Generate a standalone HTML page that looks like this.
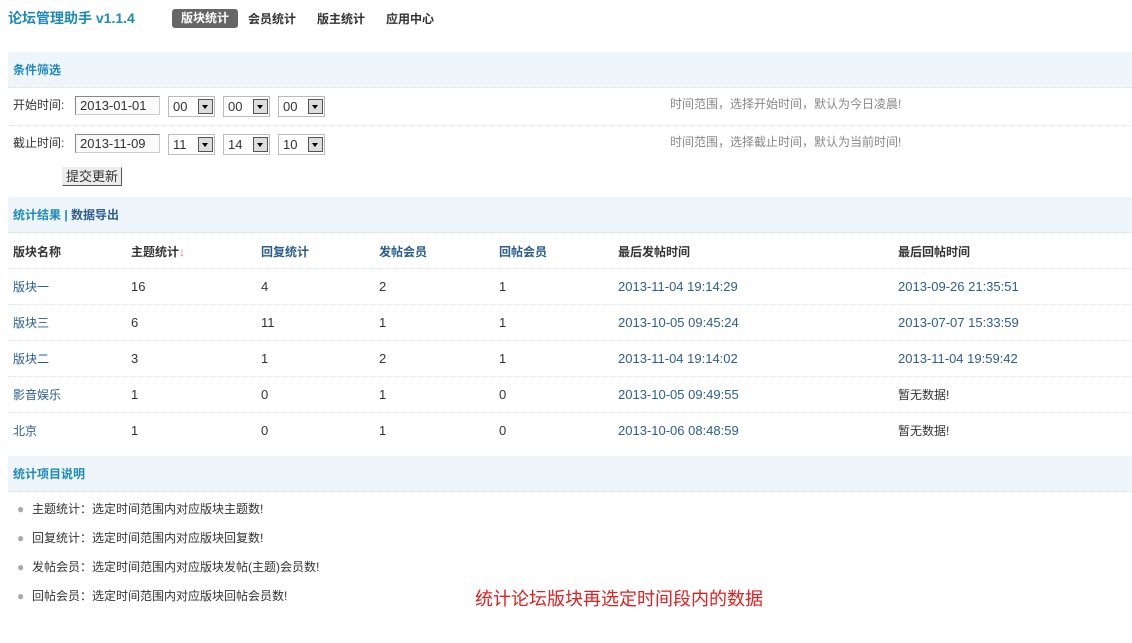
<!DOCTYPE html><html><head><meta charset="utf-8"><style>
body{margin:0;width:1132px;height:643px;background:#fff;font-family:"Liberation Sans","Noto Sans CJK SC",sans-serif;font-size:12px;color:#333;position:relative;overflow:hidden}
.a{position:absolute;white-space:nowrap;line-height:16px}
.hd{position:absolute;left:8px;width:1124px;height:35px;background:#eef6fc;border-bottom:1px dotted #d6dde3}
.hd span{position:absolute;left:5px;top:10px;font-weight:bold;color:#1d8ab8;line-height:16px}
.ln{position:absolute;left:8px;width:1124px;border-top:1px dotted #dde2e6}
.in{position:absolute;height:19px;border:1px solid #999;border-color:#888 #ccc #ccc #888;background:#fafafa;font-size:13px;line-height:17px;padding-left:4px;box-sizing:border-box}
.sel{position:absolute;width:47px;height:21px;border:1px solid #bbb;box-sizing:border-box;font-size:13px;line-height:19px;padding-left:4px;top:0}
.sel i{position:absolute;right:1px;top:2px;width:15px;height:15px;border:1px solid #555;background:#ddd;box-sizing:border-box}
.sel i:after{content:"";position:absolute;left:3px;top:5px;border:3px solid transparent;border-top:4px solid #000;border-bottom:0}
.lk{color:#2b5d8f}
.g{color:#888}
.b{font-weight:bold}
.n{font-size:13px}
.li span{color:#aaa;display:inline-block;width:15px}
</style></head><body>
<div class="a b" style="left:8px;top:10px;font-size:14px;color:#1d8ab8">论坛管理助手 v1.1.4</div>
<div class="a b" style="left:172px;top:9px;width:66px;height:19px;background:#666;color:#fff;border-radius:3px;text-align:center;line-height:19px">版块统计</div>
<div class="a b" style="left:248px;top:11px">会员统计</div>
<div class="a b" style="left:317px;top:11px">版主统计</div>
<div class="a b" style="left:386px;top:11px">应用中心</div>

<div class="hd" style="top:52px"><span>条件筛选</span></div>
<div class="a" style="left:13px;top:97px">开始时间:</div>
<div class="in" style="left:75px;top:96px;width:85px">2013-01-01</div>
<div class="a" style="left:168px;top:96px"><div class="sel" style="left:0">00<i></i></div><div class="sel" style="left:55px">00<i></i></div><div class="sel" style="left:110px">00<i></i></div></div>
<div class="a g" style="left:670px;top:96px">时间范围，选择开始时间，默认为今日凌晨!</div>
<div class="ln" style="top:125px"></div>
<div class="a" style="left:13px;top:135px">截止时间:</div>
<div class="in" style="left:75px;top:134px;width:85px">2013-11-09</div>
<div class="a" style="left:168px;top:134px"><div class="sel" style="left:0">11<i></i></div><div class="sel" style="left:55px">14<i></i></div><div class="sel" style="left:110px">10<i></i></div></div>
<div class="a g" style="left:670px;top:134px">时间范围，选择截止时间，默认为当前时间!</div>
<div class="a" style="left:62px;top:167px;width:60px;height:19px;border:1px solid #777;border-color:#eee #555 #555 #eee;background:#ececec;text-align:center;line-height:17px;font-size:13px;box-sizing:border-box">提交更新</div>

<div class="hd" style="top:197px"><span>统计结果 <span style="position:static;color:#1d8ab8">|</span> <span style="position:static;color:#2b5d8f">数据导出</span></span></div>
<div class="a b" style="left:13px;top:244px">版块名称</div>
<div class="a b" style="left:131px;top:244px">主题统计<span style="color:#f66">↓</span></div>
<div class="a b lk" style="left:261px;top:244px">回复统计</div>
<div class="a b lk" style="left:379px;top:244px">发帖会员</div>
<div class="a b lk" style="left:499px;top:244px">回帖会员</div>
<div class="a b" style="left:618px;top:244px">最后发帖时间</div>
<div class="a b" style="left:898px;top:244px">最后回帖时间</div>
<div class="ln" style="top:268px"></div>

<div class="a lk" style="left:13px;top:279px">版块一</div><div class="a n" style="left:131px;top:279px">16</div><div class="a n" style="left:261px;top:279px">4</div><div class="a n" style="left:379px;top:279px">2</div><div class="a n" style="left:499px;top:279px">1</div><div class="a lk n" style="left:618px;top:279px">2013-11-04 19:14:29</div><div class="a lk n" style="left:898px;top:279px">2013-09-26 21:35:51</div>
<div class="ln" style="top:304px"></div>
<div class="a lk" style="left:13px;top:315px">版块三</div><div class="a n" style="left:131px;top:315px">6</div><div class="a n" style="left:261px;top:315px">11</div><div class="a n" style="left:379px;top:315px">1</div><div class="a n" style="left:499px;top:315px">1</div><div class="a lk n" style="left:618px;top:315px">2013-10-05 09:45:24</div><div class="a lk n" style="left:898px;top:315px">2013-07-07 15:33:59</div>
<div class="ln" style="top:340px"></div>
<div class="a lk" style="left:13px;top:351px">版块二</div><div class="a n" style="left:131px;top:351px">3</div><div class="a n" style="left:261px;top:351px">1</div><div class="a n" style="left:379px;top:351px">2</div><div class="a n" style="left:499px;top:351px">1</div><div class="a lk n" style="left:618px;top:351px">2013-11-04 19:14:02</div><div class="a lk n" style="left:898px;top:351px">2013-11-04 19:59:42</div>
<div class="ln" style="top:376px"></div>
<div class="a lk" style="left:13px;top:387px">影音娱乐</div><div class="a n" style="left:131px;top:387px">1</div><div class="a n" style="left:261px;top:387px">0</div><div class="a n" style="left:379px;top:387px">1</div><div class="a n" style="left:499px;top:387px">0</div><div class="a lk n" style="left:618px;top:387px">2013-10-05 09:49:55</div><div class="a" style="left:898px;top:387px">暂无数据!</div>
<div class="ln" style="top:412px"></div>
<div class="a lk" style="left:13px;top:423px">北京</div><div class="a n" style="left:131px;top:423px">1</div><div class="a n" style="left:261px;top:423px">0</div><div class="a n" style="left:379px;top:423px">1</div><div class="a n" style="left:499px;top:423px">0</div><div class="a lk n" style="left:618px;top:423px">2013-10-06 08:48:59</div><div class="a" style="left:898px;top:423px">暂无数据!</div>

<div class="hd" style="top:456px"><span>统计项目说明</span></div>
<div class="a li" style="left:17px;top:495px;line-height:29px">
<div><span>●</span>主题统计：选定时间范围内对应版块主题数!</div>
<div><span>●</span>回复统计：选定时间范围内对应版块回复数!</div>
<div><span>●</span>发帖会员：选定时间范围内对应版块发帖(主题)会员数!</div>
<div><span>●</span>回帖会员：选定时间范围内对应版块回帖会员数!</div>
</div>
<div class="a" style="left:475px;top:589px;font-size:18px;line-height:20px;color:#e02020">统计论坛版块再选定时间段内的数据</div>
</body></html>
